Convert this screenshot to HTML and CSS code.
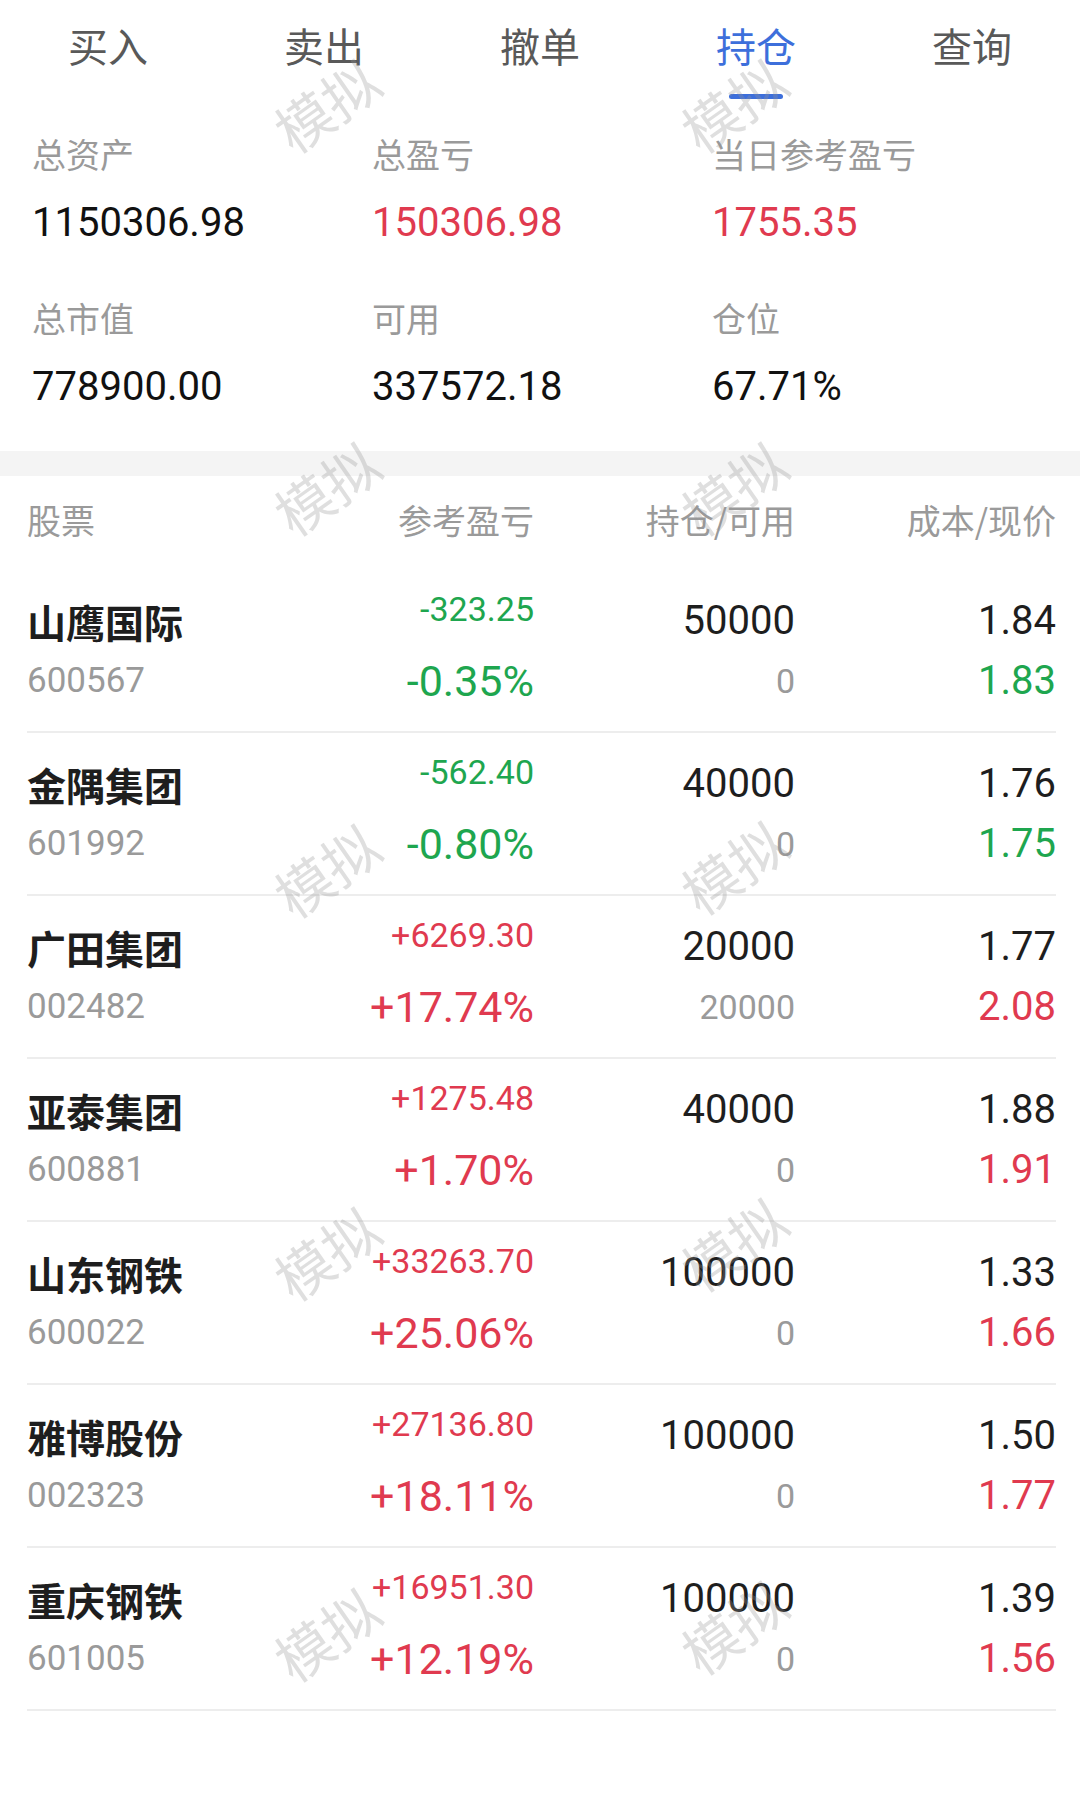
FILE: index.html
```html
<!DOCTYPE html>
<html lang="zh-CN">
<head>
<meta charset="utf-8">
<title>持仓</title>
<link rel="stylesheet" href="styles.css">
</head>
<body>
<div class="page">
  <nav class="tabs">
    <div class="tab"><span class="tab-label">买入</span></div>
    <div class="tab"><span class="tab-label">卖出</span></div>
    <div class="tab"><span class="tab-label">撤单</span></div>
    <div class="tab active"><span class="tab-label">持仓</span><span class="tab-bar"></span></div>
    <div class="tab"><span class="tab-label">查询</span></div>
  </nav>

  <section class="stats">
    <div class="stat"><div class="stat-label">总资产</div><div class="stat-value">1150306.98</div></div>
    <div class="stat"><div class="stat-label">总盈亏</div><div class="stat-value up">150306.98</div></div>
    <div class="stat"><div class="stat-label">当日参考盈亏</div><div class="stat-value up">1755.35</div></div>
    <div class="stat"><div class="stat-label">总市值</div><div class="stat-value">778900.00</div></div>
    <div class="stat"><div class="stat-label">可用</div><div class="stat-value">337572.18</div></div>
    <div class="stat"><div class="stat-label">仓位</div><div class="stat-value">67.71%</div></div>
  </section>

  <div class="band"></div>

  <section class="table">
    <div class="thead">
      <div class="th left">股票</div>
      <div class="th">参考盈亏</div>
      <div class="th">持仓/可用</div>
      <div class="th">成本/现价</div>
    </div>

    <div class="row">
      <div class="cell left"><div class="name">山鹰国际</div><div class="code">600567</div></div>
      <div class="cell"><div class="pnl down">-323.25</div><div class="pct down">-0.35%</div></div>
      <div class="cell"><div class="big">50000</div><div class="avail">0</div></div>
      <div class="cell"><div class="big">1.84</div><div class="price down">1.83</div></div>
    </div>
    <div class="row">
      <div class="cell left"><div class="name">金隅集团</div><div class="code">601992</div></div>
      <div class="cell"><div class="pnl down">-562.40</div><div class="pct down">-0.80%</div></div>
      <div class="cell"><div class="big">40000</div><div class="avail">0</div></div>
      <div class="cell"><div class="big">1.76</div><div class="price down">1.75</div></div>
    </div>
    <div class="row">
      <div class="cell left"><div class="name">广田集团</div><div class="code">002482</div></div>
      <div class="cell"><div class="pnl up">+6269.30</div><div class="pct up">+17.74%</div></div>
      <div class="cell"><div class="big">20000</div><div class="avail">20000</div></div>
      <div class="cell"><div class="big">1.77</div><div class="price up">2.08</div></div>
    </div>
    <div class="row">
      <div class="cell left"><div class="name">亚泰集团</div><div class="code">600881</div></div>
      <div class="cell"><div class="pnl up">+1275.48</div><div class="pct up">+1.70%</div></div>
      <div class="cell"><div class="big">40000</div><div class="avail">0</div></div>
      <div class="cell"><div class="big">1.88</div><div class="price up">1.91</div></div>
    </div>
    <div class="row">
      <div class="cell left"><div class="name">山东钢铁</div><div class="code">600022</div></div>
      <div class="cell"><div class="pnl up">+33263.70</div><div class="pct up">+25.06%</div></div>
      <div class="cell"><div class="big">100000</div><div class="avail">0</div></div>
      <div class="cell"><div class="big">1.33</div><div class="price up">1.66</div></div>
    </div>
    <div class="row">
      <div class="cell left"><div class="name">雅博股份</div><div class="code">002323</div></div>
      <div class="cell"><div class="pnl up">+27136.80</div><div class="pct up">+18.11%</div></div>
      <div class="cell"><div class="big">100000</div><div class="avail">0</div></div>
      <div class="cell"><div class="big">1.50</div><div class="price up">1.77</div></div>
    </div>
    <div class="row">
      <div class="cell left"><div class="name">重庆钢铁</div><div class="code">601005</div></div>
      <div class="cell"><div class="pnl up">+16951.30</div><div class="pct up">+12.19%</div></div>
      <div class="cell"><div class="big">100000</div><div class="avail">0</div></div>
      <div class="cell"><div class="big">1.39</div><div class="price up">1.56</div></div>
    </div>
  </section>

  <div class="watermarks" aria-hidden="true">
    <span class="wm wm-a1">模拟</span><span class="wm wm-b1">模拟</span>
    <span class="wm wm-a2">模拟</span><span class="wm wm-b2">模拟</span>
    <span class="wm wm-a3">模拟</span><span class="wm wm-b3">模拟</span>
    <span class="wm wm-a4">模拟</span><span class="wm wm-b4">模拟</span>
    <span class="wm wm-a5">模拟</span><span class="wm wm-b5">模拟</span>
  </div>
</div>
</body>
</html>
```
FILE: styles.css
```css
html, body {
  margin: 0;
  padding: 0;
  background: #ffffff;
}

body {
  font-family: Roboto, "Noto Sans CJK SC", sans-serif;
  color: #222222;
}

.page {
  position: relative;
  width: 1080px;
  min-height: 1793px;
  overflow: hidden;
}

/* ---------- tabs ---------- */
.tabs {
  display: grid;
  grid-template-columns: repeat(5, 1fr);
  height: 100px;
}

.tab {
  display: flex;
  flex-direction: column;
  align-items: center;
  padding-top: 17px;
}

.tab-label {
  font-family: "Noto Sans CJK SC", sans-serif;
  font-size: 40px;
  line-height: 56px;
  color: #595959;
}

.tab.active .tab-label {
  color: #3d6fdb;
}

.tab-bar {
  margin-top: 21px;
  width: 54px;
  height: 5px;
  border-radius: 3px;
  background: #3d6fdb;
}

/* ---------- stats ---------- */
.stats {
  display: grid;
  grid-template-columns: 340px 340px 340px;
  row-gap: 43px;
  padding: 30px 28px 36px 32px;
}

.stat {
  display: flex;
  flex-direction: column;
  gap: 17px;
}

.stat-label {
  font-family: "Noto Sans CJK SC", sans-serif;
  font-size: 34px;
  line-height: 48px;
  color: #9a9a9a;
}

.stat-value {
  font-size: 40px;
  line-height: 56px;
  color: #111111;
}

.up { color: #e03a4f; }
.down { color: #1ea64f; }

.stat-value.up { color: #e03a4f; }

/* ---------- gray band ---------- */
.band {
  height: 25px;
  background: #f4f4f4;
}

/* ---------- table ---------- */
.table {
  padding: 0 24px 0 27px;
}

.thead,
.row {
  display: grid;
  grid-template-columns: 240px 267px 261px 261px;
}

.thead {
  height: 94px;
  padding-top: 20px;
  box-sizing: border-box;
}

.th {
  font-family: "Noto Sans CJK SC", sans-serif;
  font-size: 34px;
  line-height: 48px;
  color: #9a9a9a;
  text-align: right;
}

.th.left { text-align: left; }

.row {
  height: 163px;
  box-sizing: border-box;
  border-bottom: 2px solid #ededed;
  padding-top: 23px;
}

.cell {
  display: flex;
  flex-direction: column;
  align-items: flex-end;
}

.cell.left { align-items: flex-start; }

.name {
  font-family: "Noto Sans CJK SC", sans-serif;
  font-weight: 700;
  font-size: 39px;
  line-height: 56px;
  color: #1e1e1e;
}

.code {
  margin-top: 4px;
  font-size: 35px;
  line-height: 56px;
  color: #9a9a9a;
}

.pnl {
  font-size: 34px;
  line-height: 32px;
}

.pct {
  margin-top: 28px;
  font-size: 43px;
  line-height: 56px;
}

.big {
  font-size: 40px;
  line-height: 56px;
  color: #1e1e1e;
}

.avail {
  margin-top: 4px;
  font-size: 34px;
  line-height: 56px;
  color: #9a9a9a;
}

.price {
  margin-top: 4px;
  font-size: 40px;
  line-height: 56px;
}

/* ---------- watermark overlay ---------- */
.watermarks {
  position: absolute;
  inset: 0;
  pointer-events: none;
}

.wm {
  position: absolute;
  width: 160px;
  height: 70px;
  margin-left: -80px;
  margin-top: -35px;
  font-family: "Noto Sans CJK SC", sans-serif;
  font-size: 56px;
  line-height: 70px;
  text-align: center;
  color: rgba(150, 150, 150, 0.3);
  transform: rotate(-35deg);
}

.wm-a1 { left: 326px; top: 104px; }
.wm-b1 { left: 733px; top: 104px; }
.wm-a2 { left: 326px; top: 487px; }
.wm-b2 { left: 733px; top: 487px; }
.wm-a3 { left: 326px; top: 869px; }
.wm-b3 { left: 733px; top: 866px; }
.wm-a4 { left: 326px; top: 1252px; }
.wm-b4 { left: 733px; top: 1243px; }
.wm-a5 { left: 326px; top: 1633px; }
.wm-b5 { left: 733px; top: 1626px; }
```
